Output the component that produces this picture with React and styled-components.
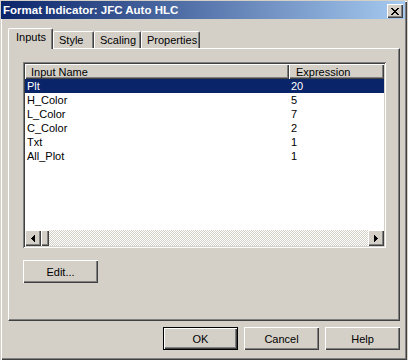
import React from 'react';
import styled, { createGlobalStyle, css } from 'styled-components';

const Global = createGlobalStyle`
  html, body { margin: 0; padding: 0; background: #d4d0c8; }
  body { font-family: "Liberation Sans", Arial, sans-serif; font-size: 11px; color: #000; }
  *, *::before, *::after { box-sizing: border-box; }
`;

const raised = css`
  background: #d4d0c8;
  box-shadow: inset 1px 1px #fff, inset -1px -1px #404040, inset -2px -2px #808080;
`;

const Window = styled.div`
  width: 407px;
  height: 360px;
  padding: 1px 2px 2px 1px;
  background: #d4d0c8;
  box-shadow: inset 1px 1px #d4d0c8, inset 2px 2px #fff, inset -1px -1px #404040, inset -2px -2px #808080;
  display: flex;
  flex-direction: column;
`;

const TitleBar = styled.div`
  flex: none;
  height: 18px;
  display: flex;
  align-items: center;
  justify-content: space-between;
  padding: 0 2px 0 2px;
  background: linear-gradient(to right, #0a246a, #a6caf0);
  color: #fff;
  font-weight: bold;
  font-size: 11.5px;
  white-space: nowrap;
`;

const CloseButton = styled.div`
  ${raised}
  width: 16px;
  height: 14px;
  margin-top: 2px;
  display: flex;
  align-items: center;
  justify-content: center;
  padding-right: 1px;
  svg { display: block; }
`;

const Body = styled.div`
  flex: 1;
  display: flex;
  flex-direction: column;
  padding: 9px 5px 0 7px;
`;

const TabStrip = styled.div`
  position: relative;
  height: 20px;
  display: flex;
  align-items: flex-end;
`;

const Tab = styled.div`
  flex: none;
  width: ${p => p.$w}px;
  height: ${p => (p.$active ? 21 : 17)}px;
  margin-bottom: ${p => (p.$active ? -1 : 0)}px;
  background: #d4d0c8;
  border-top: 1px solid #fff;
  border-left: 1px solid #fff;
  border-right: 1px solid #404040;
  border-radius: 2px 2px 0 0;
  box-shadow: inset -1px 0 #808080;
  padding: 2px 0 0 ${p => (p.$active ? 7 : 5)}px;
  line-height: 13px;
  white-space: nowrap;
`;

const Panel = styled.div`
  width: 392px;
  height: 273px;
  border-top: 1px solid #fff;
  border-left: 1px solid #fff;
  border-right: 1px solid #404040;
  border-bottom: 1px solid #404040;
  box-shadow: inset -1px -1px #808080;
  padding: 13px 0 0 14px;
  display: flex;
  flex-direction: column;
  align-items: flex-start;
`;

const ListBox = styled.div`
  width: 363px;
  height: 186px;
  padding: 2px;
  background: #fff;
  box-shadow: inset 1px 1px #808080, inset -1px -1px #fff, inset 2px 2px #404040, inset -2px -2px #d4d0c8;
  display: flex;
  flex-direction: column;
`;

const HeaderRow = styled.div`
  flex: none;
  height: 15px;
  display: grid;
  grid-template-columns: 264px 1fr;
`;

const HeaderCell = styled.div`
  ${raised}
  padding: 2px 0 0 ${p => p.$pad}px;
  line-height: 13px;
  white-space: nowrap;
`;

const Rows = styled.div`
  flex: 1;
  background: #fff;
`;

const Row = styled.div`
  height: 14px;
  display: grid;
  grid-template-columns: 264px 1fr;
  line-height: 14px;
  background: ${p => (p.$selected ? '#0a246a' : 'transparent')};
  color: ${p => (p.$selected ? '#fff' : '#000')};
`;

const Cell = styled.div`
  padding-left: 2px;
  white-space: nowrap;
`;

const ScrollBar = styled.div`
  flex: none;
  height: 16px;
  display: flex;
`;

const ArrowButton = styled.div`
  ${raised}
  flex: none;
  width: 16px;
  height: 16px;
  display: flex;
  align-items: center;
  justify-content: center;
  svg { display: block; }
`;

const Thumb = styled.div`
  ${raised}
  flex: none;
  width: 8px;
  height: 16px;
`;

const Track = styled.div`
  flex: 1;
  background: repeating-conic-gradient(#fff 0 25%, #d4d0c8 0 50%) 0 0 / 2px 2px;
`;

const Button = styled.button`
  ${raised}
  width: 75px;
  height: 23px;
  margin: 0;
  padding: 0;
  font: inherit;
  color: #000;
  text-align: center;
  border: ${p => (p.$default ? '1px solid #000' : 'none')};
`;

const EditButton = styled(Button)`
  margin-top: 12px;
`;

const ButtonRow = styled.div`
  margin-top: 6px;
  display: flex;
  justify-content: flex-end;
  gap: 6px;
`;

const CloseGlyph = () => (
  <svg width="8" height="7" viewBox="0 0 8 7" shapeRendering="crispEdges">
    <g fill="#000">
      <rect x="0" y="0" width="2" height="1" />
      <rect x="6" y="0" width="2" height="1" />
      <rect x="1" y="1" width="2" height="1" />
      <rect x="5" y="1" width="2" height="1" />
      <rect x="2" y="2" width="4" height="1" />
      <rect x="3" y="3" width="2" height="1" />
      <rect x="2" y="4" width="4" height="1" />
      <rect x="1" y="5" width="2" height="1" />
      <rect x="5" y="5" width="2" height="1" />
      <rect x="0" y="6" width="2" height="1" />
      <rect x="6" y="6" width="2" height="1" />
    </g>
  </svg>
);

const Arrow = ({ dir }) => (
  <svg width="4" height="7" viewBox="0 0 4 7" shapeRendering="crispEdges">
    <g fill="#000">
      {dir === 'left' ? (
        <>
          <rect x="3" y="0" width="1" height="7" />
          <rect x="2" y="1" width="1" height="5" />
          <rect x="1" y="2" width="1" height="3" />
          <rect x="0" y="3" width="1" height="1" />
        </>
      ) : (
        <>
          <rect x="0" y="0" width="1" height="7" />
          <rect x="1" y="1" width="1" height="5" />
          <rect x="2" y="2" width="1" height="3" />
          <rect x="3" y="3" width="1" height="1" />
        </>
      )}
    </g>
  </svg>
);

const tabs = [
  { label: 'Inputs', w: 45, active: true },
  { label: 'Style', w: 41 },
  { label: 'Scaling', w: 47 },
  { label: 'Properties', w: 59 },
];

const inputs = [
  ['Plt', '20'],
  ['H_Color', '5'],
  ['L_Color', '7'],
  ['C_Color', '2'],
  ['Txt', '1'],
  ['All_Plot', '1'],
];

export default function App() {
  return (
    <>
      <Global />
      <Window>
        <TitleBar>
          <span>Format Indicator: JFC Auto HLC</span>
          <CloseButton>
            <CloseGlyph />
          </CloseButton>
        </TitleBar>
        <Body>
          <TabStrip>
            {tabs.map(t => (
              <Tab key={t.label} $w={t.w} $active={t.active}>
                {t.label}
              </Tab>
            ))}
          </TabStrip>
          <Panel>
            <ListBox>
              <HeaderRow>
                <HeaderCell $pad={6}>Input Name</HeaderCell>
                <HeaderCell $pad={7}>Expression</HeaderCell>
              </HeaderRow>
              <Rows>
                {inputs.map(([name, expr], i) => (
                  <Row key={name} $selected={i === 0}>
                    <Cell>{name}</Cell>
                    <Cell>{expr}</Cell>
                  </Row>
                ))}
              </Rows>
              <ScrollBar>
                <ArrowButton>
                  <Arrow dir="left" />
                </ArrowButton>
                <Thumb />
                <Track />
                <ArrowButton>
                  <Arrow dir="right" />
                </ArrowButton>
              </ScrollBar>
            </ListBox>
            <EditButton>Edit...</EditButton>
          </Panel>
          <ButtonRow>
            <Button $default>OK</Button>
            <Button>Cancel</Button>
            <Button>Help</Button>
          </ButtonRow>
        </Body>
      </Window>
    </>
  );
}
